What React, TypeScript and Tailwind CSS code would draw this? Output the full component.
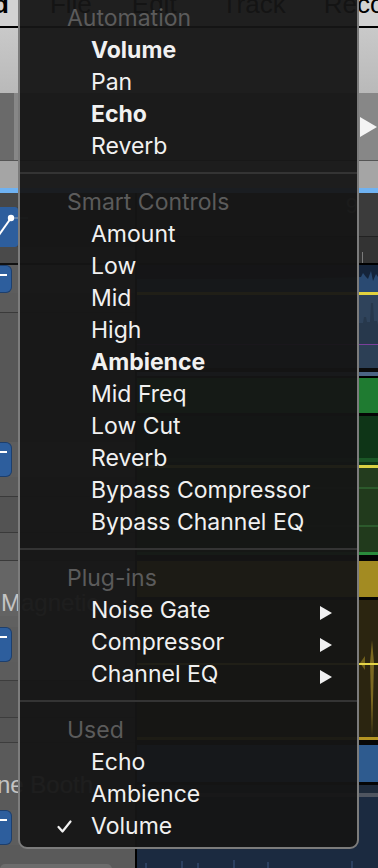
import React from 'react';

// Logic-style automation parameter menu over the tracks area

type Entry =
  | { kind: 'header'; label: string }
  | { kind: 'item'; label: string; bold?: boolean; checked?: boolean; submenu?: boolean }
  | { kind: 'sep' };

const entries: Entry[] = [
  { kind: 'header', label: 'Automation' },
  { kind: 'item', label: 'Volume', bold: true },
  { kind: 'item', label: 'Pan' },
  { kind: 'item', label: 'Echo', bold: true },
  { kind: 'item', label: 'Reverb' },
  { kind: 'sep' },
  { kind: 'header', label: 'Smart Controls' },
  { kind: 'item', label: 'Amount' },
  { kind: 'item', label: 'Low' },
  { kind: 'item', label: 'Mid' },
  { kind: 'item', label: 'High' },
  { kind: 'item', label: 'Ambience', bold: true },
  { kind: 'item', label: 'Mid Freq' },
  { kind: 'item', label: 'Low Cut' },
  { kind: 'item', label: 'Reverb' },
  { kind: 'item', label: 'Bypass Compressor' },
  { kind: 'item', label: 'Bypass Channel EQ' },
  { kind: 'sep' },
  { kind: 'header', label: 'Plug-ins' },
  { kind: 'item', label: 'Noise Gate', submenu: true },
  { kind: 'item', label: 'Compressor', submenu: true },
  { kind: 'item', label: 'Channel EQ', submenu: true },
  { kind: 'sep' },
  { kind: 'header', label: 'Used' },
  { kind: 'item', label: 'Echo' },
  { kind: 'item', label: 'Ambience' },
  { kind: 'item', label: 'Volume', checked: true },
];

function MenuRow({ entry }: { entry: Entry }) {
  if (entry.kind === 'sep') {
    return (
      <div className="pt-[10px] pb-[12px]">
        <div className="h-[2px] bg-[#343434]" />
      </div>
    );
  }
  if (entry.kind === 'header') {
    return <div className="h-[32px] leading-[32px] pl-[47px] text-[#5b5b5b]">{entry.label}</div>;
  }
  return (
    <div className="h-[32px] flex items-center leading-[32px] text-[#f1f1f1]">
      <div className="w-[71px] pl-[37px] flex items-center">
        {entry.checked && (
          <svg width="15" height="13" viewBox="0 0 15 13">
            <path d="M1.5 7 L5.5 11.5 L13.5 1.5" fill="none" stroke="#f1f1f1" strokeWidth="2.2" strokeLinecap="round" strokeLinejoin="round" />
          </svg>
        )}
      </div>
      <span className={entry.bold ? 'font-bold' : ''}>{entry.label}</span>
      {entry.submenu && (
        <svg className="ml-auto mr-[25px] mt-[5px]" width="12" height="14" viewBox="0 0 12 14">
          <polygon points="0,0 12,7 0,14" fill="#f1f1f1" />
        </svg>
      )}
    </div>
  );
}

function BlueButton({ rowClass }: { rowClass: string }) {
  return (
    <div className={`${rowClass} flex bg-[#5d5d5d]`}>
      <div className="w-[12px] h-full bg-[#2d5e9d] border border-l-0 border-[#1d3f6d] rounded-r-[6px] pt-[8px]">
        <div className="w-[7px] h-[2px] bg-white" />
      </div>
    </div>
  );
}

function TrackHeaders() {
  return (
    <div className="w-[135px] flex flex-col font-['Liberation_Sans',Arial,sans-serif] text-[24px] text-[#c4c4c4]">
      <div className="h-[14px] bg-[#474747]" />
      <div className="h-[40px] flex bg-[#3f3f3f]">
        <div className="w-[18px] h-full bg-[#2d5e9d] rounded-r-[3px]">
          <svg width="30" height="40" viewBox="0 0 30 40">
            <line x1="11" y1="11" x2="28" y2="11" stroke="#9aa6b6" strokeWidth="1" />
            <line x1="-1" y1="28" x2="11" y2="11" stroke="#fff" strokeWidth="2" />
            <circle cx="11" cy="11" r="3.2" fill="#fff" />
          </svg>
        </div>
      </div>
      <div className="h-[16px] bg-[#4a4a4a]" />
      <div className="h-[2px] bg-[#111]" />
      <BlueButton rowClass="h-[28px]" />
      <div className="h-[19px] bg-[#5b5b5b]" />
      <div className="h-[1px] bg-[#3a3a3a]" />
      <div className="h-[129px] bg-[#575757]" />
      <BlueButton rowClass="h-[35px]" />
      <div className="h-[19px] bg-[#5a5a5a]" />
      <div className="h-[1px] bg-[#3a3a3a]" />
      <div className="h-[35px] bg-[#535353]" />
      <div className="h-[1px] bg-[#3a3a3a]" />
      <div className="h-[27px] bg-[#5a5a5a]" />
      <div className="h-[1px] bg-[#3a3a3a]" />
      <div className="h-[29px] bg-[#656565]" />
      <div className="h-[26px] bg-[#636363] leading-[26px] pl-[1px] whitespace-nowrap">Magnetic</div>
      <div className="h-[11px] bg-[#606060]" />
      <BlueButton rowClass="h-[35px]" />
      <div className="h-[18px] bg-[#5c5c5c]" />
      <div className="h-[1px] bg-[#3d3d3d]" />
      <div className="h-[36px] bg-[#525252]" />
      <div className="h-[1px] bg-[#3d3d3d]" />
      <div className="h-[24px] bg-[#555555]" />
      <div className="h-[1px] bg-[#3d3d3d]" />
      <div className="h-[28px] bg-[#5a5a5a]" />
      <div className="h-[28px] bg-[#5a5a5a] leading-[28px] -ml-[3px] whitespace-nowrap">ne Booth</div>
      <div className="h-[11px] bg-[#5a5a5a]" />
      <BlueButton rowClass="h-[35px]" />
      <div className="h-[19px] bg-[#5a5a5a]" />
      <div className="h-[4px] bg-[#5a5a5a]">
        <div className="w-[112px] h-[8px] bg-[#6c6c6c] rounded-t-[5px]" />
      </div>
    </div>
  );
}

function Regions() {
  return (
    <div className="flex-1 flex flex-col font-['Liberation_Sans',Arial,sans-serif]">
      <div className="h-[43px] bg-[#3b3b3b] flex justify-end pr-[20px] text-[22px] leading-[26px] text-[#8c8c8c]">9</div>
      <div className="h-[1px] bg-[#222]" />
      <div className="h-[26px] bg-[#333] flex justify-end pr-[15px] items-end">
        <div className="w-[1px] h-[11px] bg-[#7a7a7a]" />
      </div>
      <div className="h-[2px] bg-black" />
      <div className="h-[27px] bg-[#15243a]">
        <svg width="100%" height="27" viewBox="0 0 241 27" preserveAspectRatio="none">
          <polygon points="0,27 0,14 150,14 224,12 226,8 229,12 231,14 234,6 236,16 239,9 241,12 241,27" fill="#2a4a72" />
        </svg>
      </div>
      <div className="h-[3px] bg-[#e2d23e]" />
      <div className="h-[49px] bg-[#2f435b]">
        <svg width="100%" height="49" viewBox="0 0 241 49" preserveAspectRatio="none">
          <polygon points="180,49 180,28 226,28 227,22 229,22 230,27 233,27 234,8 236,8 237,26 240,26 241,30 241,49" fill="#27384c" />
        </svg>
      </div>
      <div className="h-[1px] bg-[#7a3f9a]" />
      <div className="h-[23px] bg-[#2c3f55]" />
      <div className="h-[4px] bg-[#0b0b0b]" />
      <div className="h-[4px] bg-[#4b6584]" />
      <div className="h-[2px] bg-black" />
      <div className="h-[35px] bg-[#1f7b31]" />
      <div className="h-[3px] bg-[#050505]" />
      <div className="h-[42px] bg-[#0e3517]" />
      <div className="h-[4px] bg-[#1a5726]" />
      <div className="h-[3px] bg-[#0e3517]" />
      <div className="h-[3px] bg-[#d9d243]" />
      <div className="h-[19px] bg-[#233c1e]" />
      <div className="h-[2px] bg-[#2c5a2c]" />
      <div className="h-[36px] bg-[#213a1c]" />
      <div className="h-[2px] bg-[#2c5a2c]" />
      <div className="h-[25px] bg-[#213a1c]" />
      <div className="h-[3px] bg-[#2a8c3c]" />
      <div className="h-[6px] bg-[#050505]" />
      <div className="h-[36px] bg-[#a38b22]" />
      <div className="h-[3px] bg-[#050505]" />
      <div className="h-[137px] bg-[#2b2510]">
        <svg width="100%" height="137" viewBox="0 0 241 137" preserveAspectRatio="none">
          <polygon points="223,63 228,56 228,70" fill="#6e5e1a" />
          <polygon points="235,40 237,63 235,137 233,63" fill="#7a6820" />
          <rect x="0" y="63" width="241" height="2" fill="#e6d648" />
        </svg>
      </div>
      <div className="h-[3px] bg-[#b59522]" />
      <div className="h-[5px] bg-[#080808]" />
      <div className="h-[37px] bg-[#2e5b8f]" />
      <div className="h-[3px] bg-[#050505]" />
      <div className="h-[8px] bg-[#1e2a3a]" />
      <div className="h-[4px] bg-[#4f5560]" />
      <div className="h-[71px] bg-[#1b2a40]">
        <svg width="100%" height="71" viewBox="0 0 241 71" preserveAspectRatio="none">
          <rect x="8" y="66" width="2" height="5" fill="#2c4060" />
          <rect x="44" y="64" width="2" height="7" fill="#2c4060" />
          <rect x="60" y="66" width="2" height="5" fill="#2c4060" />
          <rect x="96" y="63" width="2" height="8" fill="#2c4060" />
          <rect x="130" y="65" width="2" height="6" fill="#2c4060" />
          <rect x="214" y="64" width="2" height="7" fill="#2c4060" />
        </svg>
      </div>
    </div>
  );
}

export default function App() {
  return (
    <div className="relative w-[378px] h-[868px] overflow-hidden bg-[#5a5a5a] font-['Liberation_Sans',Arial,sans-serif]">
      {/* menu bar */}
      <div className="h-[26px] bg-[#d2d2d2] flex text-[26px] leading-[26px] text-black whitespace-nowrap overflow-hidden">
        <span className="-mt-[9px] -ml-[7px] font-bold">d</span>
        <span className="-mt-[9px] ml-[41px]">File</span>
        <span className="-mt-[9px] ml-[40px]">Edit</span>
        <span className="-mt-[9px] ml-[45px]">Track</span>
        <span className="-mt-[9px] ml-[38px]">Record</span>
      </div>
      <div className="h-[2px] bg-black" />
      {/* toolbar */}
      <div className="h-[65px] bg-linear-to-b from-[#c9c9c9] to-[#b9b9b9]" />
      <div className="h-[67px] flex">
        <div className="w-[14px] bg-[#6a6a6a]" />
        <div className="flex-1 bg-[#878787] flex items-center justify-end pr-[1px]">
          <svg width="17" height="20" viewBox="0 0 17 20">
            <polygon points="0,0 17,10 0,20" fill="#f4f4f4" />
          </svg>
        </div>
      </div>
      <div className="h-[1px] bg-[#555]" />
      <div className="h-[27px] bg-[#a5a5a5]" />
      <div className="h-[5px] bg-[#6fb2f2]" />
      {/* tracks */}
      <div className="flex">
        <TrackHeaders />
        <div className="w-[2px] bg-black" />
        <Regions />
      </div>

      {/* context menu */}
      <div className="absolute left-[18px] top-[-10px] w-[341px] border-2 border-[#7c7c7c] rounded-[9px] bg-[#151515]/95 pt-[10px] pb-[5px] font-['Inter',sans-serif] text-[23px] whitespace-nowrap">
        {entries.map((entry, i) => (
          <MenuRow key={i} entry={entry} />
        ))}
      </div>
    </div>
  );
}
